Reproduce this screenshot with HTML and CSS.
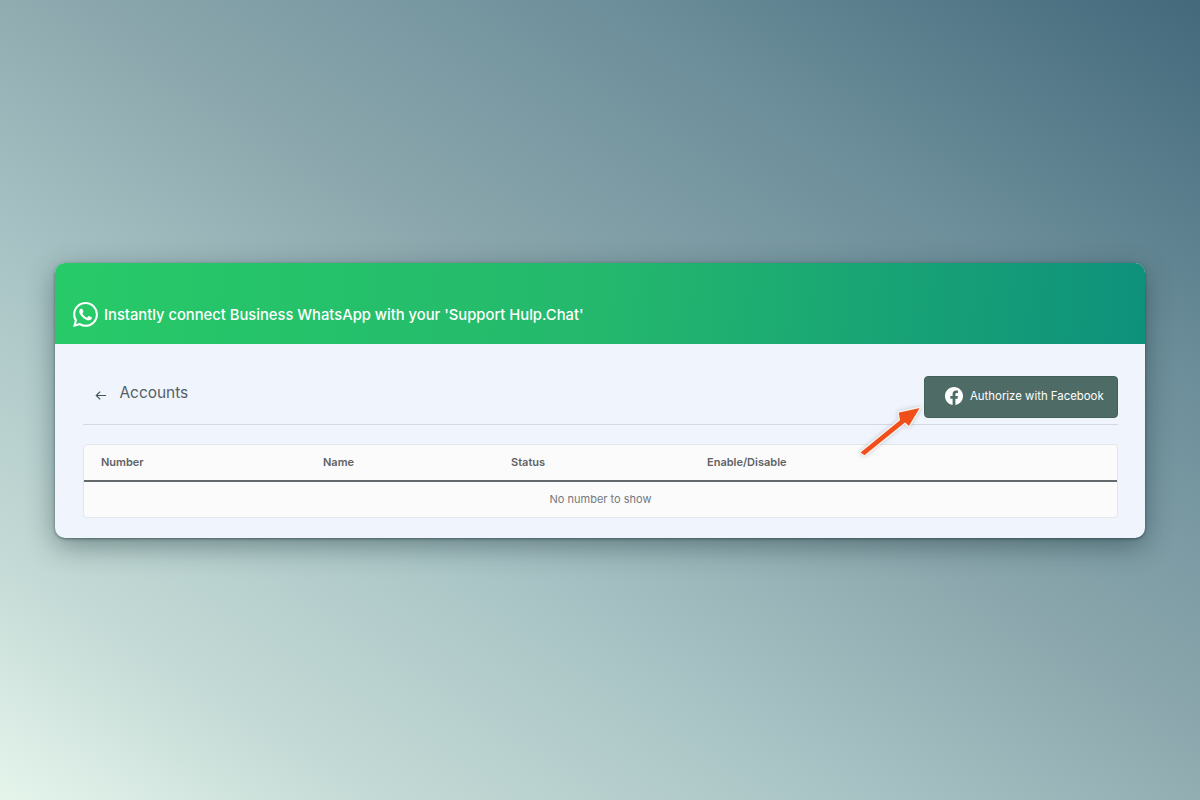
FILE: index.html
```html
<!DOCTYPE html>
<html lang="en">
<head>
<meta charset="utf-8">
<title>Accounts</title>
<link rel="stylesheet" href="styles.css">
</head>
<body>
<main class="card">
  <header class="banner">
    <svg class="wa-icon" viewBox="0 0 24 24" aria-hidden="true"><path fill="#fff" d="M17.47 14.38c-.3-.15-1.76-.87-2.03-.97-.27-.1-.47-.15-.67.15-.2.3-.77.97-.94 1.16-.17.2-.35.22-.64.08-.3-.15-1.26-.46-2.39-1.48-.88-.79-1.48-1.76-1.65-2.06-.17-.3-.02-.46.13-.6.13-.14.3-.35.45-.52.15-.17.2-.3.3-.5.1-.2.05-.37-.03-.52-.07-.15-.67-1.61-.92-2.21-.24-.58-.49-.5-.67-.51h-.57c-.2 0-.52.07-.79.37-.27.3-1.04 1.02-1.04 2.48s1.07 2.88 1.21 3.07c.15.2 2.1 3.2 5.08 4.49.71.3 1.26.49 1.69.62.71.23 1.36.2 1.87.12.57-.09 1.76-.72 2.01-1.41.25-.7.25-1.29.17-1.41-.07-.13-.27-.2-.57-.35zM12.05 21.78h-.01a9.87 9.87 0 0 1-5.03-1.38l-.36-.21-3.74.98 1-3.65-.24-.37a9.86 9.86 0 0 1-1.51-5.26c0-5.45 4.44-9.88 9.89-9.88 2.64 0 5.12 1.03 6.99 2.9a9.83 9.83 0 0 1 2.89 6.99c0 5.45-4.44 9.88-9.88 9.88zM20.46 3.49A11.82 11.82 0 0 0 12.05 0C5.5 0 .16 5.34.16 11.89c0 2.1.55 4.14 1.59 5.95L.06 24l6.3-1.65a11.88 11.88 0 0 0 5.68 1.45h.01c6.55 0 11.89-5.34 11.89-11.9 0-3.17-1.24-6.16-3.48-8.41z"/></svg>
    <h1 class="banner-title">Instantly connect Business WhatsApp with your 'Support Hulp.Chat'</h1>
  </header>
  <section class="content">
    <div class="toolbar">
      <div class="heading">
        <svg class="back" viewBox="0 0 14 12" aria-hidden="true"><path d="M13 6H1.5M6 1.5 1.5 6 6 10.5" fill="none" stroke="#44575c" stroke-width="1.4"/></svg>
        <h2 class="heading-text">Accounts</h2>
      </div>
      <div class="action">
        <button class="fb-button" type="button">
          <svg class="fb-icon" viewBox="0 0 24 24" aria-hidden="true"><path fill="#fff" d="M24 12.07C24 5.4 18.63 0 12 0S0 5.4 0 12.07c0 6.03 4.39 11.02 10.13 11.93v-8.44H7.08v-3.49h3.05V9.41c0-3.02 1.79-4.69 4.53-4.69 1.31 0 2.68.24 2.68.24v2.97h-1.51c-1.49 0-1.96.93-1.96 1.89v2.25h3.33l-.53 3.49h-2.8V24C19.61 23.09 24 18.1 24 12.07z"/></svg>
          <span>Authorize with Facebook</span>
        </button>
        <svg class="arrow" viewBox="0 0 70 60" aria-hidden="true"><path class="arrow-shape" d="M5.500 52.500 L45.300 20 L44 12 L67 7 L55 27 L51 23.300 L10.500 56 Z"/></svg>
      </div>
    </div>
    <div class="table">
      <div class="table-head">
        <span class="col col-number">Number</span>
        <span class="col col-name">Name</span>
        <span class="col col-status">Status</span>
        <span class="col">Enable/Disable</span>
      </div>
      <div class="table-empty">No number to show</div>
    </div>
  </section>
</main>
</body>
</html>
```
FILE: styles.css
```css
* { box-sizing: border-box; }
html, body { height: 100%; }
body {
  margin: 0;
  height: 800px;
  overflow: hidden;
  padding: 263px 55px 0;
  font-family: "Inter", "Liberation Sans", sans-serif;
  background-image: linear-gradient(213deg, #43697b 0%, #6c8e9a 24%, #8ba7ad 46%, #aac5c6 66%, #c3d9d5 84%, #e5f5ec 100%);
}
.card {
  width: 1090px;
  height: 275px;
  border-radius: 10px;
  overflow: hidden;
  background: #f0f4fc;
  box-shadow: 0 8px 28px rgba(20, 45, 50, .45), 0 1px 3px rgba(20, 40, 40, .5);
}
.banner {
  height: 81px;
  display: flex;
  align-items: center;
  gap: 6px;
  padding: 21px 18px 0;
  background: linear-gradient(95deg, #27ca68 0%, #24b86d 50%, #0e917c 100%);
}
.wa-icon { width: 25px; height: 25px; flex: none; }
.banner-title {
  margin: 1px 0 0;
  font-size: 14.750px;
  font-weight: 500;
  line-height: 20px;
  color: #fff;
  white-space: nowrap;
}
.content { padding: 32px 27px 0 28px; }
.toolbar {
  height: 49px;
  display: flex;
  justify-content: space-between;
  border-bottom: 1px solid #d5d9df;
}
.heading { display: flex; align-items: center; height: 33px; padding-left: 12px; gap: 12.500px; }
.back { width: 12px; height: 11px; margin-top: 6px; }
.heading-text { margin: 0; font-size: 15.400px; font-weight: 400; color: #555f66; }
.action { position: relative; }
.fb-button {
  height: 42px;
  width: 194px;
  display: flex;
  align-items: center;
  gap: 7px;
  padding: 0 0 2px 20px;
  background: #4f6b66;
  border: 1px solid #41605a;
  border-radius: 4px;
  color: #fff;
  font: 400 11.400px "Inter", "Liberation Sans", sans-serif;
  white-space: nowrap;
}
.fb-icon { width: 18px; height: 18px; flex: none; }
.arrow { position: absolute; left: -70px; top: 24px; width: 70px; height: 60px; overflow: visible; filter: drop-shadow(0 0 2px rgba(60, 60, 60, .25)); }
.arrow-shape { fill: #f04e1b; stroke: #f5f3ee; stroke-width: 1.4; stroke-linejoin: round; }
.table {
  margin-top: 19px;
  height: 74px;
  background: #fbfbfc;
  border: 1px solid #e3e6ea;
  border-radius: 4px;
}
.table-head {
  height: 37px;
  display: flex;
  align-items: center;
  padding: 0 0 2px 17px;
  border-bottom: 2px solid #64696c;
}
.col { font-size: 11px; font-weight: 600; color: #5f6265; }
.col-number { width: 222px; }
.col-name { width: 188px; }
.col-status { width: 196px; }
.table-empty {
  height: 35px;
  padding-bottom: 1px;
  display: flex;
  align-items: center;
  justify-content: center;
  font-size: 11px;
  color: #74787b;
}
```
